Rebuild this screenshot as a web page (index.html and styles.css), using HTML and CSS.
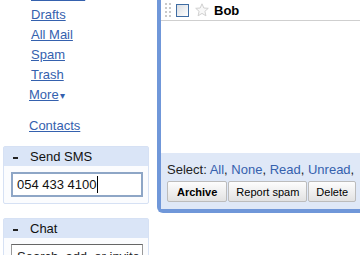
FILE: index.html
```html
<!DOCTYPE html>
<html lang="en">
<head>
    <meta charset="UTF-8">
    <title>Mail</title>
    <link rel="stylesheet" href="styles.css">
</head>
<body>
    <div class="page">
        <div class="sidebar">
            <ul class="nav">
                <li><a href="#">Sent Mail</a></li>
                <li><a href="#">Drafts</a></li>
                <li><a href="#">All Mail</a></li>
                <li><a href="#">Spam</a></li>
                <li><a href="#">Trash</a></li>
                <li class="more"><a href="#">More</a><span class="arrow">&#9662;</span></li>
            </ul>
            <div class="contacts"><a href="#">Contacts</a></div>

            <div class="side-box">
                <div class="side-head"><span class="minus"></span>Send SMS</div>
                <div class="side-body">
                    <div class="sms-input">054 433 4100<span class="caret"></span></div>
                </div>
            </div>

            <div class="side-box chat">
                <div class="side-head"><span class="minus"></span>Chat</div>
                <div class="side-body">
                    <div class="chat-input">Search, add, or invite</div>
                </div>
            </div>
        </div>

        <div class="main">
            <div class="list">
                <div class="row">
                    <svg class="grip" width="6" height="14" viewBox="0 0 6 14">
                        <rect x="0" y="0" width="2" height="2" />
                        <rect x="4" y="0" width="2" height="2" />
                        <rect x="0" y="4" width="2" height="2" />
                        <rect x="4" y="4" width="2" height="2" />
                        <rect x="0" y="8" width="2" height="2" />
                        <rect x="4" y="8" width="2" height="2" />
                        <rect x="0" y="12" width="2" height="2" />
                        <rect x="4" y="12" width="2" height="2" />
                    </svg>
                    <span class="check"></span>
                    <svg class="star" width="14" height="14" viewBox="0 0 14 14">
                        <polygon points="7,0.8 8.8,5 13.3,5.3 9.9,8.3 10.9,12.8 7,10.4 3.1,12.8 4.1,8.3 0.7,5.3 5.2,5" />
                    </svg>
                    <span class="sender">Bob</span>
                </div>
            </div>
            <div class="toolbar">
                <div class="select">Select: <a href="#">All</a>, <a href="#">None</a>, <a href="#">Read</a>, <a href="#">Unread</a>,</div>
                <div class="buttons">
                    <button class="btn btn-bold">Archive</button>
                    <button class="btn">Report spam</button>
                    <button class="btn">Delete</button>
                </div>
            </div>
        </div>
    </div>
</body>
</html>
```

FILE: styles.css
```css
body {
    margin: 0;
    font-family: "Liberation Sans", Arial, sans-serif;
    font-size: 13px;
    color: #000;
    background: #fff;
    overflow: hidden;
}

a {
    color: #3561ae;
}

.page {
    display: flex;
    align-items: flex-start;
}

.sidebar {
    width: 157px;
    flex: none;
}

.nav {
    list-style: none;
    margin: -15px 0 0;
    padding: 0 0 0 31px;
    line-height: 20px;
}

.nav .more {
    margin-left: -2px;
}

.arrow {
    color: #3561ae;
    font-size: 10px;
    margin-left: 1px;
}

.contacts {
    margin-top: 10px;
    padding-left: 29px;
    line-height: 20px;
}

.side-box {
    margin: 10px 0 0 3px;
    width: 144px;
    border: 1px solid #d6e1f4;
    border-radius: 2px;
    background: #fbfcfe;
}

.side-box.chat {
    margin-top: 14px;
}

.side-head {
    height: 19px;
    line-height: 19px;
    background: #dae5f7;
    padding-left: 9px;
    color: #111;
}

.minus {
    display: inline-block;
    width: 5px;
    height: 2px;
    background: #222;
    vertical-align: middle;
    margin-right: 12px;
}

.side-body {
    padding: 6px 5px 6px 7px;
}

.sms-input {
    height: 21px;
    line-height: 21px;
    border: 2px solid #8ea6c6;
    background: #fff;
    padding-left: 4px;
    color: #111;
}

.caret {
    display: inline-block;
    width: 1px;
    height: 17px;
    background: #000;
    vertical-align: -4px;
}

.chat-input {
    height: 21px;
    line-height: 24px;
    border: 1px solid #999;
    border-top-color: #666;
    background: #fff;
    padding-left: 5px;
    color: #222;
    white-space: nowrap;
}

.main {
    flex: 1;
    min-width: 0;
    height: 209px;
    border-left: 4px solid #7097d9;
    border-bottom: 4px solid #7097d9;
    border-bottom-left-radius: 6px;
    display: flex;
    flex-direction: column;
}

.list {
    height: 153px;
    background: #fff;
}

.row {
    height: 20px;
    border-bottom: 1px solid #cfcfcf;
    display: flex;
    align-items: center;
    padding-left: 4px;
}

.grip {
    fill: #c9c9c9;
    margin-right: 5px;
}

.check {
    width: 11px;
    height: 11px;
    border: 1px solid #3e6ca3;
    background: linear-gradient(135deg, #d9dde3, #fff);
    margin-right: 6px;
}

.star {
    fill: #f8f8f8;
    stroke: #d0d0d0;
    stroke-width: 1;
    margin-right: 5px;
}

.sender {
    font-weight: bold;
    color: #000;
}

.toolbar {
    flex: 1;
    background: #dfe8f7;
    padding: 9px 0 0 6px;
}

.select {
    line-height: 16px;
    color: #222;
    white-space: nowrap;
}

.select a {
    text-decoration: none;
}

.buttons {
    display: flex;
    gap: 1px;
    margin-top: 3px;
}

.btn {
    flex: none;
    height: 21px;
    padding: 0 7px;
    font-family: "Liberation Sans", Arial, sans-serif;
    font-size: 11px;
    white-space: nowrap;
    color: #000;
    background: linear-gradient(#fdfdfd, #e2e2e2);
    border: 1px solid #bcbcbc;
    border-radius: 2px;
}

.btn-bold {
    font-weight: bold;
    padding: 0 9px;
}
```
